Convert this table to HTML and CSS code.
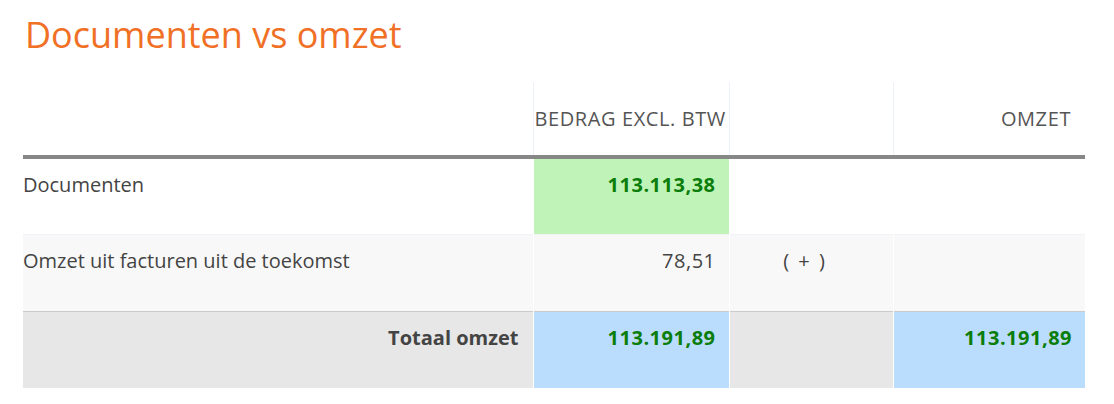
FILE: index.html
```html
<!DOCTYPE html>
<html lang="nl">
<head>
    <meta charset="UTF-8">
    <title>Documenten vs omzet</title>
    <link rel="stylesheet" href="styles.css">
</head>
<body>
    <div class="report">
        <h1 class="report-title">Documenten vs omzet</h1>

        <table class="omzet-table">
            <colgroup>
                <col class="col-label">
                <col class="col-amount">
                <col class="col-sign">
                <col class="col-total">
            </colgroup>
            <thead>
                <tr>
                    <th></th>
                    <th class="head-left">BEDRAG EXCL. BTW</th>
                    <th></th>
                    <th>OMZET</th>
                </tr>
            </thead>
            <tbody>
                <tr class="row-docs">
                    <td>Documenten</td>
                    <td class="num strong cell-green">113.113,38</td>
                    <td></td>
                    <td></td>
                </tr>
                <tr class="row-future">
                    <td>Omzet uit facturen uit de toekomst</td>
                    <td class="num">78,51</td>
                    <td class="sign">( + )</td>
                    <td></td>
                </tr>
                <tr class="row-total">
                    <td class="total-label">Totaal omzet</td>
                    <td class="num strong cell-blue">113.191,89</td>
                    <td></td>
                    <td class="num strong cell-blue">113.191,89</td>
                </tr>
            </tbody>
        </table>
    </div>
</body>
</html>
```

FILE: styles.css
```css
body {
    margin: 0;
    padding: 0;
    background: #fff;
    font-family: "Open Sans", "Noto Sans", sans-serif;
    color: #444;
}

.report {
    padding: 13px 29px 0 23px;
}

.report-title {
    margin: 0 0 25px 2px;
    font-size: 36px;
    font-weight: 400;
    line-height: 44px;
    color: #f07026;
}

.omzet-table {
    width: 1062px;
    border-collapse: collapse;
    table-layout: fixed;
    font-size: 20px;
}

.col-label { width: 510px; }
.col-amount { width: 196px; }
.col-sign { width: 164px; }
.col-total { width: 192px; }

/* kop */
.omzet-table th {
    height: 73px;
    padding: 0 14px 0 0;
    font-weight: 400;
    text-align: right;
    vertical-align: middle;
    letter-spacing: 0.6px;
    color: #555;
    border-bottom: 4px solid #878787;
}

.omzet-table th + th {
    border-left: 1px solid #edf1fa;
}

.omzet-table th.head-left {
    text-align: left;
    padding: 0 0 0 1px;
}

/* rijen */
.omzet-table td {
    height: 77px;
    padding: 14px 13px 0 0;
    box-sizing: border-box;
    vertical-align: top;
    line-height: 24px;
}

.omzet-table td + td {
    border-left: 1px solid #fff;
}

.row-future td {
    background: #f8f8f8;
    border-top: 1px solid #f1f3f8;
}

.row-total td {
    background: #e7e7e7;
    border-top: 1px solid #cbcbcb;
}

.num {
    text-align: right;
    letter-spacing: 0.5px;
}

.strong {
    font-weight: 700;
    color: #0a7d0a;
}

.sign {
    text-align: center;
    letter-spacing: 2px;
    padding-right: 12px !important;
}

.total-label {
    text-align: right;
    font-weight: 700;
    padding-right: 14px !important;
}

.cell-green {
    background: #c0f3b7 !important;
}

.cell-blue {
    background: #badcfd !important;
}
```
